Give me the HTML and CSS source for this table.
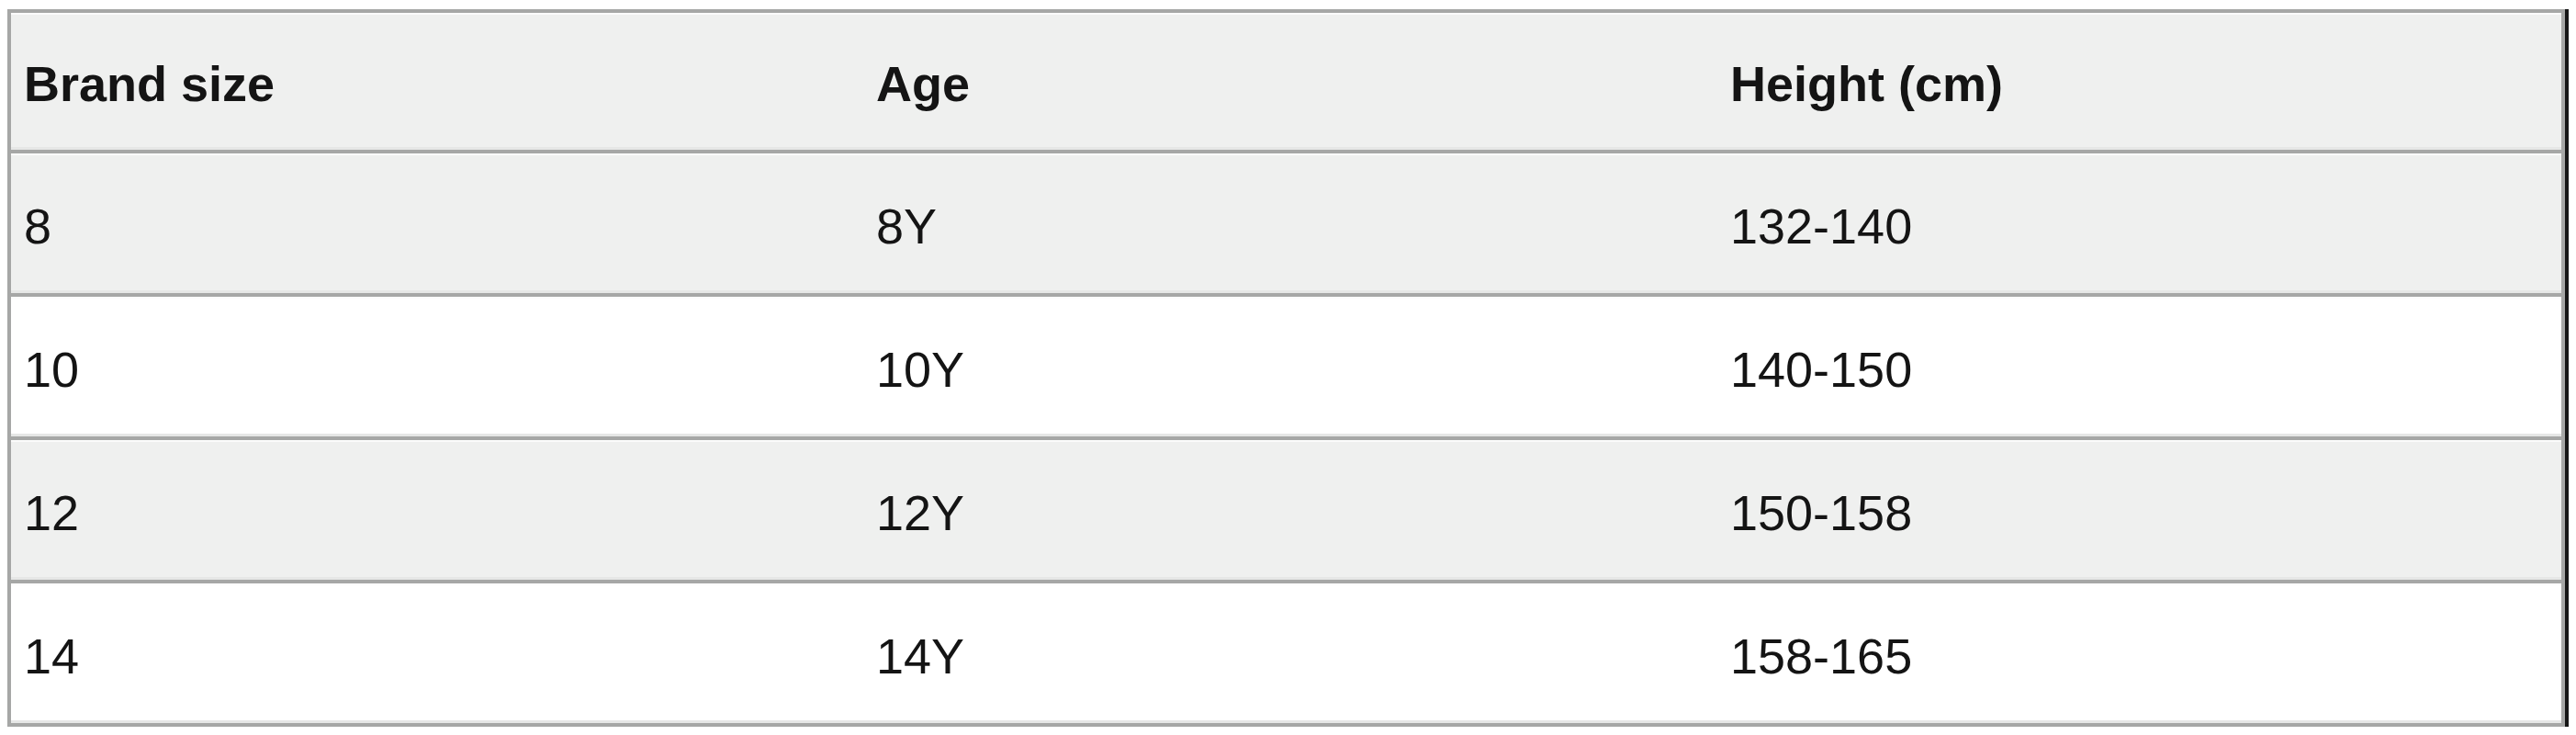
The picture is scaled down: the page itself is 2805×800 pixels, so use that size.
FILE: index.html
```html
<!DOCTYPE html>
<html lang="en">
<head>
<meta charset="utf-8">
<title>Size chart</title>
<link rel="stylesheet" href="styles.css">
</head>
<body>
<div class="wrap">
  <div class="frame">
    <table class="size-table">
      <colgroup>
        <col class="col-size">
        <col class="col-age">
        <col class="col-height">
      </colgroup>
      <thead>
        <tr class="row-head shade">
          <th>Brand size</th>
          <th>Age</th>
          <th>Height (cm)</th>
        </tr>
      </thead>
      <tbody>
        <tr class="shade"><td>8</td><td>8Y</td><td>132-140</td></tr>
        <tr><td>10</td><td>10Y</td><td>140-150</td></tr>
        <tr class="shade"><td>12</td><td>12Y</td><td>150-158</td></tr>
        <tr class="last"><td>14</td><td>14Y</td><td>158-165</td></tr>
      </tbody>
    </table>
  </div>
</div>
</body>
</html>
```

FILE: styles.css
```css
html, body {
  margin: 0;
  padding: 0;
  background: #ffffff;
}

.wrap {
  padding: 10px 8px 8px;
}

.frame {
  width: 2785px;
  border-right: 4px solid #161616;
}

.size-table {
  width: 100%;
  border-collapse: separate;
  border-spacing: 0;
  border: 4px solid #a6a7a6;
  table-layout: fixed;
  font-family: "Liberation Sans", Arial, sans-serif;
  font-size: 54px;
  color: #141414;
  background: #ffffff;
}

.col-size {
  width: 928px;
}

.col-age {
  width: 930px;
}

.size-table th,
.size-table td {
  text-align: left;
  vertical-align: middle;
  padding: 5px 14px 0;
  border-bottom: 4px solid #a6a7a6;
  box-shadow: inset 0 2px 0 #fbfbfb, inset 0 -3px 0 #e6e7e6;
}

.size-table th {
  font-weight: bold;
}

.row-head {
  height: 153px;
}

.size-table tbody tr {
  height: 156px;
}

.size-table tbody tr.last {
  height: 152px;
}

.size-table tr.last td {
  border-bottom: 0;
}

.shade {
  background: #eff0ef;
}
```
